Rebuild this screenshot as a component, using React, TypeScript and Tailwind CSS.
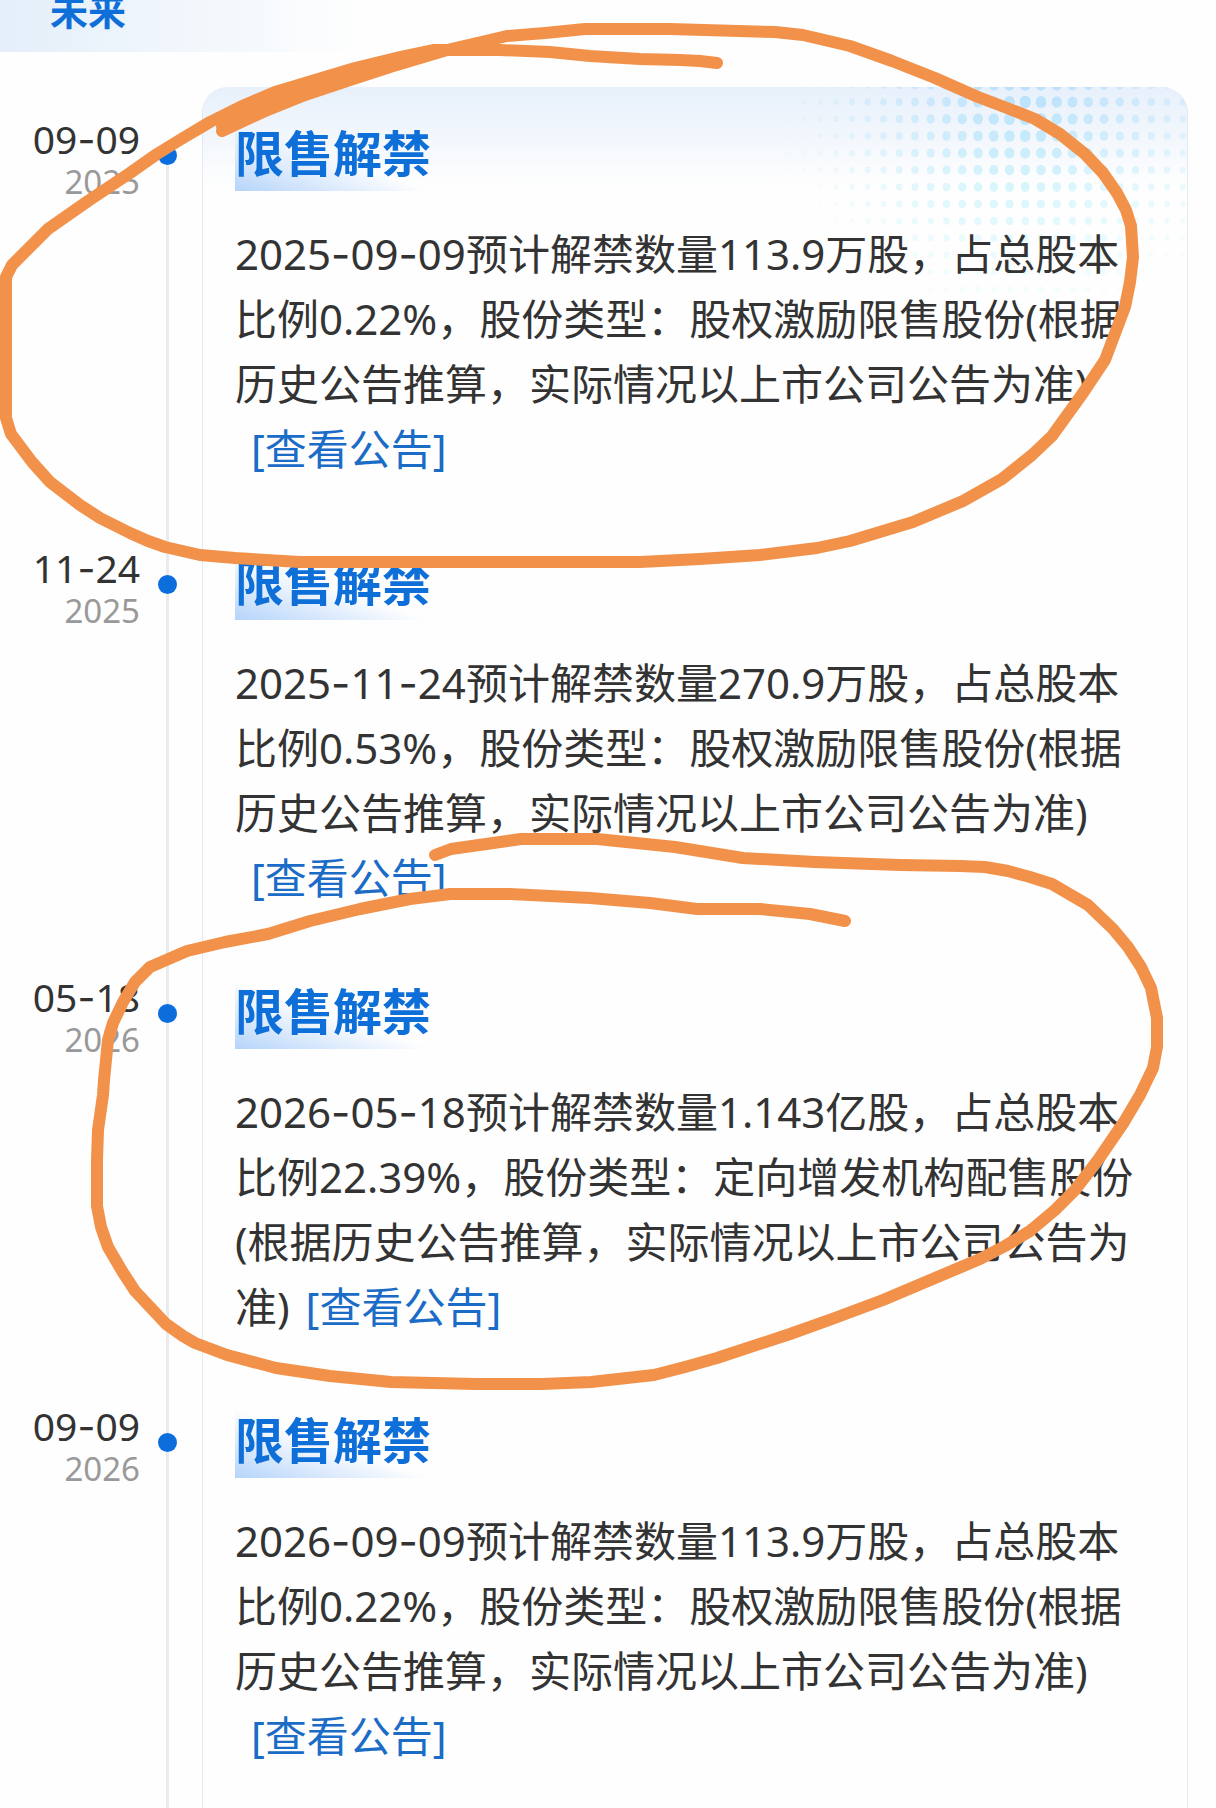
const events = [
  { day: '09-09', year: '2025', text: '2025-09-09预计解禁数量113.9万股，占总股本比例0.22%，股份类型：股权激励限售股份(根据历史公告推算，实际情况以上市公司公告为准)' },
  { day: '11-24', year: '2025', text: '2025-11-24预计解禁数量270.9万股，占总股本比例0.53%，股份类型：股权激励限售股份(根据历史公告推算，实际情况以上市公司公告为准)' },
  { day: '05-18', year: '2026', text: '2026-05-18预计解禁数量1.143亿股，占总股本比例22.39%，股份类型：定向增发机构配售股份(根据历史公告推算，实际情况以上市公司公告为准)' },
  { day: '09-09', year: '2026', text: '2026-09-09预计解禁数量113.9万股，占总股本比例0.22%，股份类型：股权激励限售股份(根据历史公告推算，实际情况以上市公司公告为准)' },
];

// Halftone decoration in the card's top right corner
function Halftone() {
  const dots = [];
  for (let row = 0; row < 13; row++) {
    for (let col = 0; col < 27; col++) {
      const x = 8 + col * 15.75;
      const y = row * 17 - 2;
      const dx = x - 244;
      const dy = y - 25;
      const r = 6.4 * (1 - Math.hypot(dx / 350, dy / 320));
      const opacity = 0.9 - Math.hypot(dx / 250, dy / 240) * 0.88;
      if (r > 0.5 && opacity > 0) {
        dots.push(
          <ellipse key={`${row}-${col}`} cx={x} cy={y} rx={r * 0.9} ry={r} opacity={opacity} fill={`hsl(${205 - row * 2} 90% ${84 + row * 0.5}%)`} />
        );
      }
    }
  }
  return (
    <svg className="pointer-events-none absolute top-0 right-0" width="406" height="220" aria-hidden="true">
      {dots}
    </svg>
  );
}

// Inter has the wide, raised hyphen that the dates use
function Dashed({ text }: { text: string }) {
  return text.split(/(-)/).map((part, i) =>
    part === '-' ? (
      <span key={i} className="font-['Inter',sans-serif] leading-none">
        -
      </span>
    ) : (
      part
    )
  );
}

function Marks() {
  return (
    <svg
      className="pointer-events-none absolute top-0 left-0"
      width="1216"
      height="1808"
      fill="none"
      stroke="#f2924a"
      strokeWidth="12"
      strokeLinecap="round"
      strokeLinejoin="round"
      aria-hidden="true"
    >
      <path d="M222 126 L263 104 L305 89 L347 77 L390 64 L433 52" />
      <path d="M222 131 L263 112 L305 95 L347 81 L390 67 L447 50 L507 36 L545 33 L585 29 L670 29 L775 32 L803 35 L850 46 L892 61 L935 78 L978 97 L1007 108 L1035 119 L1060 134 L1085 154 L1103 173 L1117 193 L1126 210 L1131 226 L1133 257 L1130 282 L1125 307 L1105 360 L1083 393 L1052 436 L1032 455 L1002 479 L963 501 L913 522 L850 541 L817 548 L760 555 L700 559 L640 562 L300 562 L235 558 L200 555 L165 547 L148 541 L130 533 L100 518 L80 505 L50 482 L32 462 L11 434 L6 418 L6 277 L12 265 L32 245 L48 229 L88 201 L130 173 L157 154 L183 138 L210 122 L240 107 L275 92 L315 80 L355 68 L400 57 L433 50 L500 50 L550 52 L590 56 L640 59 L680 60 L700 61 L717 63" />
      <path d="M435 855 L451 849 L521 839 L560 839 L597 839 L675 847 L743 858 L815 862 L900 865 L960 866 L985 867 L1008 871 L1030 877 L1052 884 L1088 905 L1113 929 L1128 947 L1141 967 L1151 988 L1157 1018 L1157 1047 L1153 1068 L1140 1095 L1124 1122 L1098 1160 L1075 1190 L1055 1210 L1030 1231 L1005 1246 L980 1259 L883 1300 L832 1319 L790 1334 L717 1358 L685 1367 L654 1375 L591 1382 L542 1384 L476 1384 L391 1382 L330 1376 L276 1368 L227 1355 L195 1343 L183 1336 L166 1324 L135 1291 L122 1271 L108 1247 L101 1227 L97 1206 L97 1160 L98 1130 L103 1095 L104 1080 L108 1040 L113 1023 L123 1002 L135 982 L150 967 L187 951 L225 942 L268 934 L310 921 L360 909 L410 899 L450 894 L510 894 L590 898 L650 903 L697 909 L760 909 L810 914 L845 921" />
    </svg>
  );
}

export default function App() {
  return (
    <div
      lang="zh-CN"
      className="relative flex min-h-screen flex-col overflow-hidden bg-[#fefefe] font-['Noto_Sans','Noto_Sans_CJK_SC',sans-serif] text-[#333]"
    >
      <header className="flex h-[52px] items-end bg-linear-to-r from-[#e4effa] to-[#fefefe] to-30% pl-[50px]">
        <h1 className="text-[38px] leading-[84px] font-bold text-[#0f6fd8]">未来</h1>
      </header>

      <ol className="mt-[35px] flex flex-1 flex-col pr-7">
        {events.map((event, i) => (
          <li key={event.text} className="flex last:flex-1">
            <time className="w-[140px] shrink-0 pt-[30px] text-right" dateTime={`${event.year}-${event.day}`}>
              <span className="block text-[39px] leading-[44px]">
                <Dashed text={event.day} />
              </span>
              <span className="block text-[33px] leading-[42px] text-[#999]">{event.year}</span>
            </time>

            <div className="flex w-[62px] shrink-0 flex-col items-center pr-2">
              <span className={i === 0 ? 'h-[59px]' : 'h-[59px] w-[3px] bg-[#ebebeb]'} />
              <span className="size-[19px] shrink-0 rounded-full bg-[#0b6edc]" />
              <span className="w-[3px] flex-1 bg-[#ebebeb]" />
            </div>

            <article
              className={`relative min-w-0 flex-1 overflow-hidden border-x border-[#e3eaf0] pt-[35px] pr-10 pb-[35px] pl-8 ${
                i === 0 ? 'rounded-t-[26px] bg-linear-to-b from-[#e7f0fb] to-[#fefefe] to-[100px]' : ''
              }`}
            >
              {i === 0 && <Halftone />}
              <h2 className="relative mb-[30px] w-fit bg-linear-to-tr from-[#b5d4fb] via-[#fefefe]/0 via-50% to-[#fefefe]/0 pb-1.5 text-[49px] leading-[63px] font-bold text-[#0f6fd8]">
                限售解禁
              </h2>
              <p className="relative text-[42px] leading-[65px]">
                <Dashed text={event.text} />
                <a href="#notice" className="inline-block pl-4 text-[#1a6cc6]">
                  [查看公告]
                </a>
              </p>
            </article>
          </li>
        ))}
      </ol>

      <Marks />
    </div>
  );
}
